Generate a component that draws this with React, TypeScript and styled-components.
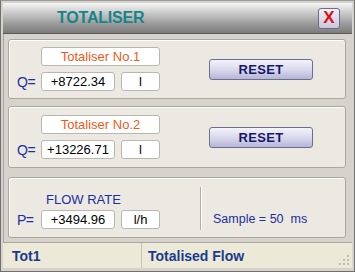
import React from 'react'
import styled, { createGlobalStyle } from 'styled-components'

const GlobalStyle = createGlobalStyle`
  html, body {
    margin: 0;
    padding: 0;
    background: #d4d0c8;
  }
  * {
    box-sizing: border-box;
  }
`

const Window = styled.div`
  width: 355px;
  height: 272px;
  display: flex;
  flex-direction: column;
  background: #d6d3cc;
  border: 1px solid #6f6f6f;
  border-top-color: #9a9a9a;
  padding: 2px 2px 3px 2px;
  font-family: 'Liberation Sans', Arial, sans-serif;
`

const TitleBar = styled.div`
  height: 31px;
  flex: none;
  display: flex;
  align-items: center;
  justify-content: space-between;
  padding: 0 12px 0 54px;
  background: linear-gradient(#f6f6f6 0%, #d4d4d4 25%, #9a9a9a 70%, #7c7c7c 100%);
  border-bottom: 1px solid #5a5a5a;
`

const Title = styled.div`
  font-size: 16px;
  font-weight: bold;
  color: #15858a;
  letter-spacing: -0.2px;
`

const CloseButton = styled.div`
  width: 22px;
  height: 21px;
  display: flex;
  align-items: center;
  justify-content: center;
  border: 1px solid #6b6b8a;
  border-radius: 3px;
  background: linear-gradient(#f2f0f8, #c9c6da);
  color: #d80f16;
  font-size: 17px;
  font-weight: bold;
`

const Body = styled.div`
  flex: 1;
  display: flex;
  flex-direction: column;
  padding: 5px 6px 0 4px;
  border-left: 1px solid #a8a6a0;
`

const Panel = styled.div<{ $h: number; $top: number; $pad?: number }>`
  flex: none;
  display: flex;
  align-items: center;
  height: ${(p) => p.$h}px;
  margin-top: ${(p) => p.$top}px;
  background: #ebe9e2;
  border: 1px solid #a9a79f;
  border-radius: 3px;
  box-shadow: inset 1px 1px 0 #ffffff;
  padding: ${(p) => p.$pad || 0}px 0 0 8px;
`

const Fields = styled.div`
  display: grid;
  grid-template-columns: 18px 74px 39px;
  column-gap: 6px;
  row-gap: 6px;
  align-items: center;
`

const Field = styled.div<{ $color?: string; $span?: boolean }>`
  height: 19px;
  display: flex;
  align-items: center;
  justify-content: center;
  background: #ffffff;
  border: 1px solid #b9b7b0;
  border-radius: 3px;
  font-size: 13px;
  color: ${(p) => p.$color || '#000000'};
  grid-column: ${(p) => (p.$span ? '2 / 4' : 'auto')};
`

const Sign = styled.div`
  font-size: 14px;
  color: #1c2fa0;
  white-space: nowrap;
  letter-spacing: -0.5px;
`

const Caption = styled.div`
  grid-column: 2 / 4;
  font-size: 13px;
  color: #1c2fa0;
  padding-left: 5px;
  height: 16px;
  margin-bottom: -4px;
`

const ResetButton = styled.div`
  margin-left: 49px;
  width: 104px;
  height: 21px;
  display: flex;
  align-items: center;
  justify-content: center;
  border: 1px solid #6c6e92;
  border-radius: 3px;
  background: linear-gradient(#f4f4fb, #d6d6ec 55%, #b6b6d6);
  font-size: 13px;
  font-weight: bold;
  color: #17186b;
  letter-spacing: 0.3px;
`

const Divider = styled.div`
  width: 2px;
  align-self: stretch;
  margin: 3px 0 7px 40px;
  border-left: 1px solid #b0aea6;
  border-right: 1px solid #ffffff;
`

const Sample = styled.div`
  margin: 17px 0 0 11px;
  font-size: 12.5px;
  color: #1c2fa0;
  white-space: pre;
`

const StatusBar = styled.div`
  margin-top: auto;
  height: 26px;
  flex: none;
  display: flex;
  align-items: center;
  background: #ece9d8;
  border-top: 1px solid #a8a6a0;
  position: relative;
`

const StatusCell = styled.div<{ $w?: number }>`
  width: ${(p) => (p.$w ? `${p.$w}px` : 'auto')};
  flex: ${(p) => (p.$w ? 'none' : 1)};
  height: 100%;
  display: flex;
  align-items: center;
  padding-left: ${(p) => (p.$w ? 9 : 6)}px;
  font-size: 14px;
  font-weight: bold;
  color: #1a3c8c;
  border-right: ${(p) => (p.$w ? '1px solid #c8c5b4' : 'none')};
`

const Grip = styled.svg`
  position: absolute;
  right: 2px;
  bottom: 2px;
`

function TotaliserPanel({ name, value, h, top }: { name: string; value: string; h: number; top: number }) {
  return (
    <Panel $h={h} $top={top}>
      <Fields>
        <span />
        <Field $span $color="#ee5a1a">
          {name}
        </Field>
        <Sign>Q=</Sign>
        <Field>{value}</Field>
        <Field>l</Field>
      </Fields>
      <ResetButton>RESET</ResetButton>
    </Panel>
  )
}

export default function App() {
  return (
    <>
      <GlobalStyle />
      <Window>
        <TitleBar>
          <Title>TOTALISER</Title>
          <CloseButton>X</CloseButton>
        </TitleBar>
        <Body>
          <TotaliserPanel name="Totaliser No.1" value="+8722.34" h={60} top={0} />
          <TotaliserPanel name="Totaliser No.2" value="+13226.71" h={62} top={7} />
          <Panel $h={61} $top={9} $pad={6}>
            <Fields>
              <span />
              <Caption>FLOW RATE</Caption>
              <Sign>P=</Sign>
              <Field>+3494.96</Field>
              <Field>l/h</Field>
            </Fields>
            <Divider />
            <Sample>Sample = 50  ms</Sample>
          </Panel>
        </Body>
        <StatusBar>
          <StatusCell $w={139}>Tot1</StatusCell>
          <StatusCell>Totalised Flow</StatusCell>
          <Grip width="12" height="12" viewBox="0 0 12 12">
            {[
              [9, 1],
              [9, 5],
              [5, 5],
              [9, 9],
              [5, 9],
              [1, 9],
            ].map(([x, y]) => (
              <rect key={`${x}-${y}`} x={x} y={y} width="2" height="2" fill="#c2bfae" />
            ))}
          </Grip>
        </StatusBar>
      </Window>
    </>
  )
}
